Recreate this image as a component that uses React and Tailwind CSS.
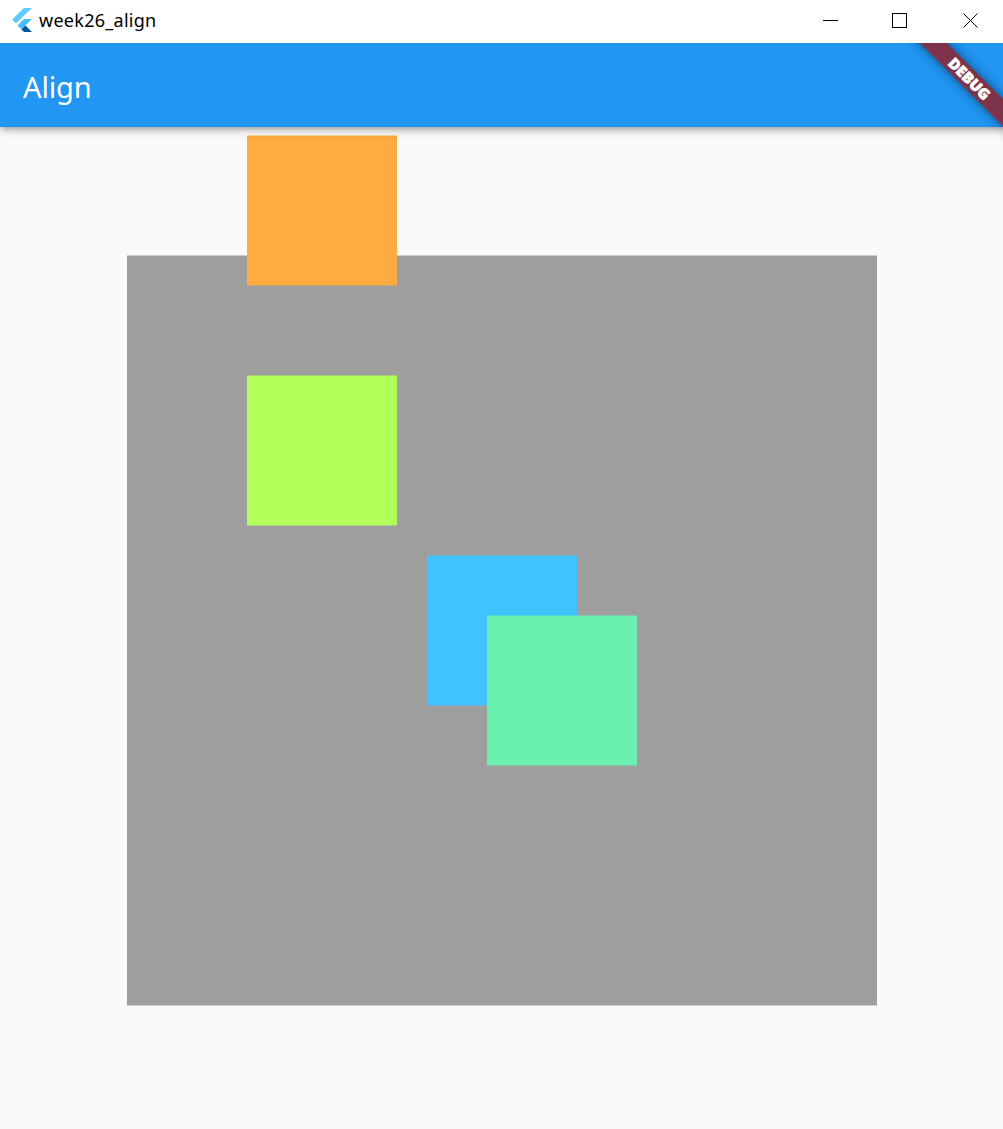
import React from "react";

function FlutterLogo() {
  return (
    <svg className="ml-3 h-6 w-5" viewBox="0 0 20 24">
      <path d="M11.8 0H20L4 15.3 0 11.7Z" fill="#60cbfb" />
      <path d="M12 11H20L13.5 17.5 9.5 21.5 5.5 17.5Z" fill="#48bff4" />
      <path d="M9.5 21.5 13.5 17.5 20 24H12Z" fill="#01579b" />
    </svg>
  );
}

export default function App() {
  return (
    <div className="flex h-[1129px] w-[1003px] flex-col overflow-hidden bg-[#fafafa] font-['Noto_Sans','Open_Sans',sans-serif]">
      <header className="relative z-20 flex h-[43px] shrink-0 items-center bg-white pb-[3px] text-black">
        <FlutterLogo />
        <span className="ml-[7px] text-[18px] leading-6 tracking-[0.27px]">week26_align</span>
        <svg className="ml-auto mr-6 h-4 w-[157px]" viewBox="0 0 157 16" fill="none" stroke="black" shapeRendering="crispEdges">
          <path d="M1 8.5H16M70.5 1.5H84.5V15.5H70.5Z" />
          <path d="M141.5 1.5 155.5 15.5M155.5 1.5 141.5 15.5" shapeRendering="auto" />
        </svg>
      </header>
      <div className="relative z-10 flex h-[84px] shrink-0 items-center bg-[#2196f3] shadow-[0_3px_6px_-1px_rgba(0,0,0,0.3),0_2px_13px_rgba(0,0,0,0.15)]">
        <h1 className="pl-[23px] pt-[4px] text-[29px] font-normal leading-10 tracking-[-0.15px] text-white">Align</h1>
        <div className="absolute right-0 top-0 flex h-[110px] w-[120px] justify-center overflow-hidden pl-[52px] pt-[26px]">
          <div className="flex h-[19px] w-[180px] shrink-0 rotate-45 items-center justify-center bg-[#7d3349] pl-px text-[15px] font-black tracking-[0.15px] text-white shadow-[0_0_12px_rgba(0,0,0,0.5)] [-webkit-text-stroke:0.6px_white]">DEBUG</div>
        </div>
      </div>
      <main className="flex flex-1 justify-center pl-px pt-2">
        <div className="grid h-[870px] w-[750px] translate-y-[0.5px] grid-cols-[repeat(25,30px)] grid-rows-[repeat(29,30px)]">
          <div className="col-span-full col-start-1 row-start-5 row-end-30 bg-[#9e9e9e]" />
          <div className="col-start-5 col-end-10 row-start-1 row-end-6 bg-[#ffab40]" />
          <div className="col-start-5 col-end-10 row-start-9 row-end-14 bg-[#b2ff59]" />
          <div className="col-start-11 col-end-16 row-start-15 row-end-20 bg-[#40c4ff]" />
          <div className="col-start-13 col-end-18 row-start-17 row-end-22 bg-[#69f0ae]" />
        </div>
      </main>
    </div>
  );
}
